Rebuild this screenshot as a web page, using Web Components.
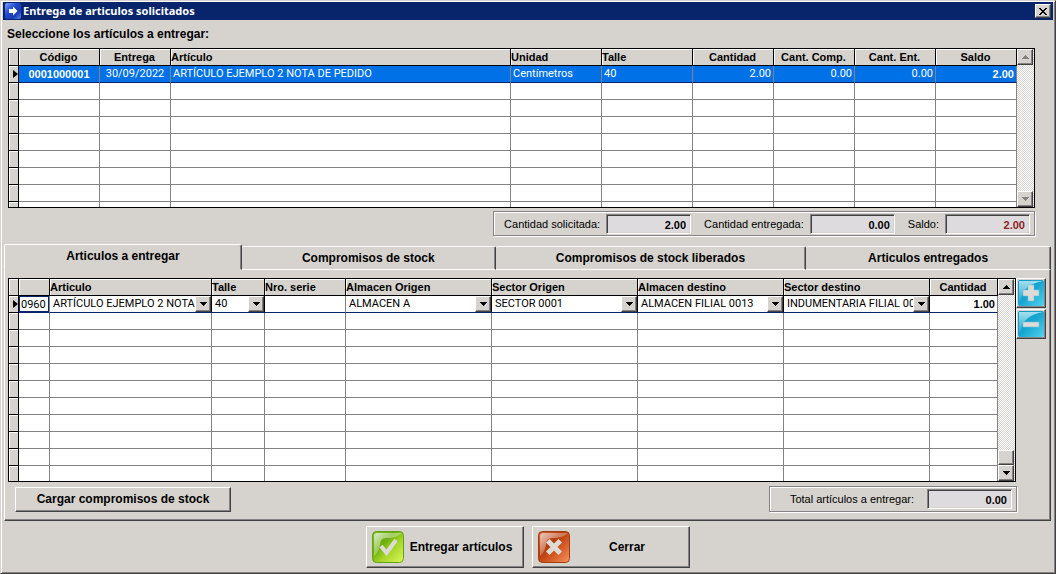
<!DOCTYPE html>
<html lang="es">
<head>
<meta charset="utf-8">
<title>Entrega de articulos solicitados</title>
<style>
  html, body { margin: 0; min-height: 100%; }
  body {
    --face: #d6d3ce;
    --navy: #08246b;
    --select: #0071e7;
    --shade: #848284;
    --dark: #424142;
    --field: #dedbde;
    font: 11px/14px "Liberation Sans", Arial, sans-serif;
    color: #000;
    background: var(--face);
  }
</style>
</head>
<body>
<app-window heading="Entrega de articulos solicitados">
  <section-label>Seleccione los artículos a entregar:</section-label>
  <data-grid id="pedidos" rows="9"></data-grid>
  <totals-box>
    <total-field label="Cantidad solicitada:" value="2.00"></total-field>
    <total-field label="Cantidad entregada:" value="0.00"></total-field>
    <total-field label="Saldo:" value="2.00" tone="alert"></total-field>
  </totals-box>
  <tab-panel>
    <data-grid id="entregas" rows="11"></data-grid>
    <icon-button slot="side" kind="plus" label="Agregar"></icon-button>
    <icon-button slot="side" kind="minus" label="Quitar"></icon-button>
    <push-button slot="foot">Cargar compromisos de stock</push-button>
    <totals-box slot="foot" wide>
      <total-field label="Total artículos a entregar:" value="0.00"></total-field>
    </totals-box>
  </tab-panel>
  <push-button slot="actions" icon="check">Entregar artículos</push-button>
  <push-button slot="actions" icon="cross">Cerrar</push-button>
</app-window>

<script>
const define = (name, markup, setup) => customElements.define(name, class extends HTMLElement {
  connectedCallback() {
    if (this.shadowRoot) return;
    const root = this.attachShadow({ mode: 'open' });
    root.innerHTML = typeof markup === 'function' ? markup(this) : markup;
    if (setup) setup(this, root);
  }
});

const bevel = `
  box-sizing: border-box; background: var(--face);
  border: 1px solid; border-color: #fff var(--dark) var(--dark) #fff;
  box-shadow: inset -1px -1px var(--shade);`;

/* Window frame, title bar, client area and action row */
define('app-window', el => `
  <style>
    :host {
      display: flex; flex-direction: column; box-sizing: border-box; min-height: 100vh;
      background: var(--face); padding: 0 1px 1px;
      border: 1px solid; border-color: var(--face) var(--dark) var(--dark) var(--face);
      box-shadow: inset 1px 1px #fff, inset -1px -1px var(--shade);
    }
    header {
      display: flex; align-items: center; gap: 2px; height: 18px; margin: 1px 1px 0;
      padding: 0 2px; background: var(--navy); color: #fff;
    }
    h1 { flex: 1; margin: 0; font: bold 11px/18px "Noto Sans", sans-serif; }
    header button { ${bevel} width: 16px; height: 14px; padding: 0; display: grid; place-items: center; }
    svg { display: block; }
    main { flex: 1; display: flex; flex-direction: column; padding: 7px 3px 0 2px; }
    footer { display: flex; justify-content: center; gap: 8px; padding: 5px 0 4px; }
  </style>
  <header>
    <svg width="16" height="16" viewBox="0 0 16 16" aria-hidden="true">
      <defs><linearGradient id="g" x1="0" y1="0" x2="1" y2="1"><stop offset="0" stop-color="#7ba6f7"/><stop offset=".4" stop-color="#2149ce"/><stop offset=".7" stop-color="#1838b5"/><stop offset="1" stop-color="#5a8af0"/></linearGradient></defs>
      <rect width="16" height="16" rx="2" fill="url(#g)"/>
      <path d="M4 6h4V3.500L12.500 8 8 12.500V10H4z" fill="#fff"/>
    </svg>
    <h1>${el.getAttribute('heading')}</h1>
    <button type="button" aria-label="Cerrar ventana">
      <svg width="8" height="7" viewBox="0 0 8 7" shape-rendering="crispEdges"><path d="M0 0h2v1h1v1h2V1h1V0h2v1H7v1H6v1H5v1h1v1h1v1h1v1H6V6H5V5H3v1H2v1H0V6h1V5h1V4h1V3H2V2H1V1H0z"/></svg>
    </button>
  </header>
  <main><slot></slot></main>
  <footer><slot name="actions"></slot></footer>`);

define('section-label', `
  <style>
    :host { display: block; height: 21px; padding-left: 3px; font-weight: bold; font-size: 12px; line-height: 15px; box-sizing: border-box; }
  </style><slot></slot>`);

/* Sunken group with read-only totals */
define('totals-box', `
  <style>
    :host {
      display: flex; align-items: center; align-self: flex-end; gap: 13px; box-sizing: border-box;
      height: 25px; margin: 3px 16px 0 0; padding: 0 4px 0 10px;
      border: 1px solid var(--shade);
      box-shadow: inset 1px 1px #fff, 1px 1px #fff;
    }
    :host([wide]) { margin: 0; padding-left: 20px; height: 26px; }
  </style><slot></slot>`);

define('total-field', el => `
  <style>
    :host { display: block; }
    label { display: flex; align-items: center; gap: 6px; }
    :host-context([wide]) label { gap: 13px; }
    input {
      box-sizing: border-box; width: 85px; height: 20px; margin: 0; padding: 2px 4px 0; outline: 0;
      text-align: right; font: bold 11px/14px "Liberation Sans", Arial, sans-serif; border-radius: 0;
      color: ${el.getAttribute('tone') === 'alert' ? '#8c2421' : '#000'};
      background: var(--field); border: 1px solid; border-color: var(--shade) #fff #fff var(--shade);
      box-shadow: inset 1px 1px var(--dark), inset -1px -1px var(--face);
    }
  </style>
  <label><span>${el.getAttribute('label')}</span><input readonly value="${el.getAttribute('value')}"></label>`);

define('combo-box', el => `
  <style>
    :host { display: grid; grid-template-columns: minmax(0, 1fr) 16px; height: 16px; }
    select {
      grid-area: 1 / 1 / 2 / 3; appearance: none; box-sizing: border-box; width: 100%; height: 16px;
      border: 0; margin: 0; padding: 0 16px 0 3px; outline: 0; border-radius: 0; background: #fff; color: #000;
      font: 11px/16px Roboto, "Liberation Sans", sans-serif; text-overflow: clip;
    }
    span { grid-area: 1 / 2; ${bevel} display: grid; place-items: center; pointer-events: none; }
  </style>
  <select aria-label="${el.getAttribute('label')}"><option>${el.getAttribute('value')}</option></select>
  <span><svg width="7" height="4" viewBox="0 0 7 4" shape-rendering="crispEdges"><path d="M0 0h7v1H6v1H5v1H4v1H3V3H2V2H1V1H0z"/></svg></span>`);

define('scroll-bar', el => {
  const ink = el.hasAttribute('disabled') ? 'var(--shade)' : '#000';
  return `
  <style>
    :host {
      display: flex; flex-direction: column; width: 17px; flex: none;
      background: repeating-conic-gradient(#fff 0 25%, var(--face) 0 50%) 0 0 / 2px 2px;
    }
    button, i { ${bevel} flex: none; width: 16px; height: 16px; padding: 0; display: grid; place-items: center; }
    i { height: 15px; }
    b { flex: 1; }
    svg { fill: ${ink}; }
  </style>
  <button type="button" aria-label="Subir"><svg width="7" height="4" viewBox="0 0 7 4" shape-rendering="crispEdges"><path d="M3 0h1v1h1v1h1v1h1v1H0V3h1V2h1V1h1z"/></svg></button>
  <b></b>${el.hasAttribute('disabled') ? '' : '<i></i>'}
  <button type="button" aria-label="Bajar"><svg width="7" height="4" viewBox="0 0 7 4" shape-rendering="crispEdges"><path d="M0 0h7v1H6v1H5v1H4v1H3V3H2V2H1V1H0z"/></svg></button>`;
});

/* Record grid: columns and the first record come from the models below */
const models = {
  pedidos: {
    height: 160, right: 16, selected: true, scroll: 'disabled',
    cols: [
      { t: 'Código', w: 81, a: 'center', v: '0001000001', b: 1 },
      { t: 'Entrega', w: 71, a: 'center', v: '30/09/2022' },
      { t: 'Artículo', a: 'left', v: 'ARTÍCULO EJEMPLO 2 NOTA DE PEDIDO' },
      { t: 'Unidad', w: 91, a: 'left', v: 'Centímetros' },
      { t: 'Talle', w: 91, a: 'left', v: '40' },
      { t: 'Cantidad', w: 81, a: 'right', v: '2.00' },
      { t: 'Cant. Comp.', w: 81, a: 'right', v: '0.00' },
      { t: 'Cant. Ent.', w: 81, a: 'right', v: '0.00' },
      { t: 'Saldo', w: 81, a: 'right', v: '2.00', b: 1 }
    ]
  },
  entregas: {
    height: 204, right: 0, selected: false, scroll: '',
    cols: [
      { t: '', w: 31, a: 'left', v: '0960', k: 'input' },
      { t: 'Articulo', a: 'left', v: 'ARTÍCULO EJEMPLO 2 NOTA DE PEDIDO', k: 'combo' },
      { t: 'Talle', w: 53, a: 'left', v: '40', k: 'combo' },
      { t: 'Nro. serie', w: 81, a: 'left', v: '' },
      { t: 'Almacen Origen', w: 146, a: 'left', v: 'ALMACEN A', k: 'combo' },
      { t: 'Sector Origen', w: 146, a: 'left', v: 'SECTOR 0001', k: 'combo' },
      { t: 'Almacen destino', w: 146, a: 'left', v: 'ALMACEN FILIAL 0013', k: 'combo' },
      { t: 'Sector destino', w: 146, a: 'left', v: 'INDUMENTARIA FILIAL 0013', k: 'combo' },
      { t: 'Cantidad', w: 68, a: 'right', v: '1.00', b: 1 }
    ]
  }
};

const cellOf = c =>
  c.k === 'input' ? `<td class="edit"><input aria-label="Código" value="${c.v}"></td>` :
  c.k === 'combo' ? `<td class="box"><combo-box label="${c.t}" value="${c.v}"></combo-box></td>` :
  `<td class="${c.a}${c.b ? ' strong' : ''}">${c.v}</td>`;

define('data-grid', el => {
  const m = models[el.id];
  const blanks = +el.getAttribute('rows') - 1;
  return `
  <style>
    :host {
      display: flex; box-sizing: border-box; height: ${m.height}px; overflow: hidden; flex: none;
      margin: 0 ${m.right}px 0 4px; border: 1px solid #000; background: #fff;
    }
    .view { flex: 1; min-width: 0; overflow: hidden; }
    table { width: 100%; table-layout: fixed; border-collapse: separate; border-spacing: 0; }
    th, td {
      box-sizing: border-box; height: 17px; padding: 0 2px; line-height: 16px; overflow: hidden; white-space: nowrap;
      border: solid var(--shade); border-width: 0 1px 1px 0;
    }
    td { font-family: Roboto, "Liberation Sans", sans-serif; }
    td.strong { font-family: "Liberation Sans", Arial, sans-serif; font-weight: bold; }
    th {
      font-weight: bold; background: var(--face); border-color: #000; padding: 0 1px 0 0;
      box-shadow: inset 1px 1px #fff;
    }
    tbody th { padding: 0; }
    tbody th svg { display: block; margin-left: auto; }
    .left { text-align: left; }
    .center { text-align: center; }
    td.right { text-align: right; }
    .current td { border-bottom-color: var(--navy); }
    .picked td { background: var(--select); color: #fff; }
    td.edit, td.box { padding: 0; }
    td.edit input {
      display: block; box-sizing: border-box; width: 100%; height: 16px; margin: 0; padding: 0 1px; outline: 0;
      border: 1px solid var(--navy); border-radius: 0; font: 11px/14px Roboto, "Liberation Sans", sans-serif;
    }
    td.box { border-right-color: #000; }
  </style>
  <div class="view"><table>
    <colgroup><col style="width:10px">${m.cols.map(c => `<col${c.w ? ` style="width:${c.w}px"` : ''}>`).join('')}</colgroup>
    <thead><tr><th></th>${m.cols.map(c => `<th scope="col" class="${c.a === 'left' ? 'left' : 'center'}">${c.t}</th>`).join('')}</tr></thead>
    <tbody>
      <tr class="current${m.selected ? ' picked' : ''}"><th><svg width="5" height="8" viewBox="0 0 5 8" aria-hidden="true"><path d="M0 0l5 4-5 4z"/></svg></th>${m.cols.map(cellOf).join('')}</tr>
      ${`<tr><th></th>${m.cols.map(() => '<td></td>').join('')}</tr>`.repeat(blanks)}
    </tbody>
  </table></div>
  <scroll-bar ${m.scroll}></scroll-bar>`;
});

/* Tab strip with the page that the first tab shows */
define('tab-panel', `
  <style>
    :host { display: flex; flex-direction: column; flex: 1 0 auto; margin-top: 8px; }
    nav { display: flex; align-items: flex-end; height: 26px; }
    button {
      box-sizing: border-box; height: 24px; flex: 1 1 0; min-width: 0; margin: 0; padding: 0; color: #000;
      font: bold 12px/22px "Liberation Sans", Arial, sans-serif; background: var(--face);
      border: solid; border-width: 1px 1px 1px 0; border-color: #fff var(--dark) #fff #fff; border-radius: 2px 2px 0 0;
      box-shadow: inset -1px 0 var(--shade);
    }
    button[aria-selected=true] { height: 26px; padding-bottom: 2px; border-left-width: 1px; border-bottom-color: var(--face); }
    .n1 { flex-grow: 237; } .n2 { flex-grow: 254; } .n3 { flex-grow: 311; } .n4 { flex-grow: 245; }
    .page {
      flex: 1; display: flex; flex-direction: column; padding: 8px 1px 7px 0; 
      border: solid; border-width: 0 1px 1px; border-color: #fff var(--dark) var(--dark) #fff;
      box-shadow: inset -1px -1px var(--shade);
    }
    .body { display: flex; flex: none; margin-left: -1px; padding-right: 3px; }
    .body > slot:first-child::slotted(*) { flex: 1; min-width: 0; }
    .side { display: flex; flex-direction: column; gap: 1px; }
    .foot { display: flex; justify-content: space-between; align-items: center; padding: 4px 32px 0 10px; }
  </style>
  <nav role="tablist">
    <button type="button" role="tab" class="n1" aria-selected="true">Articulos a entregar</button>
    <button type="button" role="tab" class="n2" aria-selected="false">Compromisos de stock</button>
    <button type="button" role="tab" class="n3" aria-selected="false">Compromisos de stock liberados</button>
    <button type="button" role="tab" class="n4" aria-selected="false">Articulos entregados</button>
  </nav>
  <div class="page" role="tabpanel">
    <div class="body"><slot></slot><div class="side"><slot name="side"></slot></div></div>
    <div class="foot"><slot name="foot"></slot></div>
  </div>`);

define('icon-button', el => `
  <style>
    :host { display: block; }
    button { ${bevel} display: grid; place-items: center; width: 30px; height: 30px; padding: 0; }
    svg { display: block; }
  </style>
  <button type="button" aria-label="${el.getAttribute('label')}">
    <svg width="26" height="26" viewBox="0 0 26 26">
      <defs><linearGradient id="s" x1="0" y1="0" x2="1" y2="1"><stop offset="0" stop-color="#1095c0"/><stop offset=".5" stop-color="#18a6d0"/><stop offset="1" stop-color="#52d3ef"/></linearGradient>
      <linearGradient id="h" x1="0" y1="0" x2="0" y2="1"><stop offset="0" stop-color="#a5dff0"/><stop offset="1" stop-color="#a5dff0" stop-opacity=".1"/></linearGradient></defs>
      <rect width="26" height="26" rx="2" fill="url(#s)"/>
      <path d="M1 1h24C12 3 4 10 3 19L1 22z" fill="url(#h)"/>
      <path d="${el.getAttribute('kind') === 'plus' ? 'M10 5h6v5h5v6h-5v5h-6v-5H5v-6h5z' : 'M5 11h16v5H5z'}" fill="#dedbd6" stroke="#73c3da" stroke-width=".6"/>
    </svg>
  </button>`);

const glyphs = {
  check: `<defs><linearGradient id="a" x1="0" y1="0" x2="1" y2="1"><stop offset="0" stop-color="#7bbd29"/><stop offset=".35" stop-color="#6bae08"/><stop offset=".6" stop-color="#a5d629"/><stop offset="1" stop-color="#def75a"/></linearGradient>
    <linearGradient id="w" x1="0" y1="0" x2="1" y2="1"><stop offset="0" stop-color="#fff" stop-opacity=".7"/><stop offset=".6" stop-color="#fff" stop-opacity=".2"/></linearGradient></defs>
    <rect x=".5" y=".5" width="31" height="31" rx="4" fill="url(#a)" stroke="#63a510"/>
    <path d="M2 5q0-3 3-3h25C27 5 22 7 14 7q-6 0-6 7-1 7-6 11z" fill="url(#w)"/>
    <path d="M9 15l5.500 7L24 9" fill="none" stroke="#dedbd6" stroke-width="4"/>`,
  cross: `<defs><linearGradient id="a" x1="0" y1="0" x2="1" y2="1"><stop offset="0" stop-color="#ce6139"/><stop offset=".4" stop-color="#b53c08"/><stop offset=".65" stop-color="#d65d29"/><stop offset="1" stop-color="#f79663"/></linearGradient>
    <linearGradient id="w" x1="0" y1="0" x2="1" y2="1"><stop offset="0" stop-color="#fff" stop-opacity=".65"/><stop offset=".6" stop-color="#fff" stop-opacity=".2"/></linearGradient></defs>
    <rect x=".5" y=".5" width="31" height="31" rx="4" fill="url(#a)" stroke="#a53c10"/>
    <path d="M2 5q0-3 3-3h25C27 5 22 7 14 7q-6 0-6 7-1 7-6 11z" fill="url(#w)"/>
    <path d="M11.500 11.500l9 9M20.500 11.500l-9 9" fill="none" stroke="#dedbd6" stroke-width="5" stroke-linecap="square" stroke-linejoin="round"/>`
};

define('push-button', el => {
  const icon = el.getAttribute('icon');
  return `
  <style>
    :host { display: block; }
    button {
      ${bevel} display: flex; align-items: center; width: ${icon ? 158 : 216}px; height: ${icon ? 42 : 25}px;
      padding: 0 5px; color: #000; font: bold ${icon ? '12px/16px' : '12px/14px'} "Liberation Sans", Arial, sans-serif;
    }
    svg { flex: none; display: block; }
    span { flex: 1; text-align: center; white-space: nowrap; }
  </style>
  <button type="button">${icon ? `<svg width="32" height="32" viewBox="0 0 32 32" aria-hidden="true">${glyphs[icon]}</svg>` : ''}<span><slot></slot></span></button>`;
});
</script>
</body>
</html>
